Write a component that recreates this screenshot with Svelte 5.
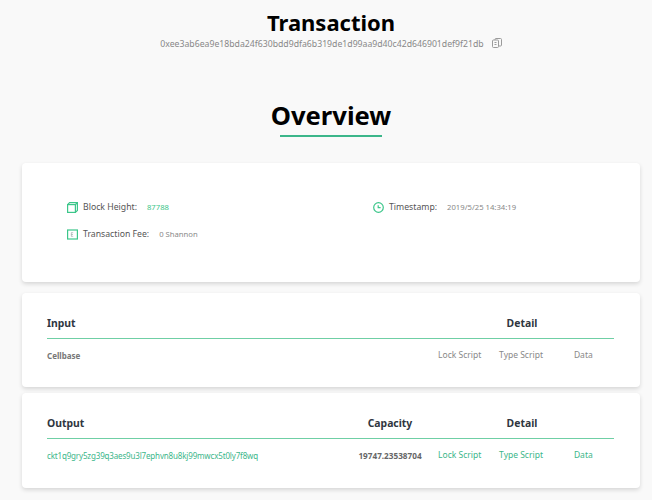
<script>
  const overview = [
    { label: 'Block Height:', value: '87788', icon: 'block', green: true },
    { label: 'Timestamp:', value: '2019/5/25 14:34:19', icon: 'clock' },
    { label: 'Transaction Fee:', value: '0 Shannon', icon: 'fee' }
  ];
  const scripts = ['Lock Script', 'Type Script', 'Data'];
</script>

<div class="page">
  <header class="head">
    <h1>Transaction</h1>
    <div class="hash">
      <span>0xee3ab6ea9e18bda24f630bdd9dfa6b319de1d99aa9d40c42d646901def9f21db</span>
      <svg class="copy" viewBox="0 0 10 10" width="10" height="10" fill="none" stroke="#9b9b9b" stroke-width="1">
        <rect x="0.5" y="2" width="6" height="7.5" rx="1" />
        <path d="M3 2V1.5a1 1 0 0 1 1-1h4.5a1 1 0 0 1 1 1V7a1 1 0 0 1-1 1H6.5" />
        <path d="M2.5 4.5h2M2.5 6.5h2" />
      </svg>
    </div>
  </header>

  <h2 class="title"><span>Overview</span></h2>

  <section class="card overview">
    {#each overview as item}
      <div class="item">
        {#if item.icon === 'block'}
          <svg viewBox="0 0 11 11" width="11" height="11" fill="none" stroke="#3cc68a" stroke-width="1.2">
            <rect x="0.6" y="2.6" width="7.8" height="7.8" />
            <path d="M0.6 2.6L2.6 0.6H10.4V8.4L8.4 10.4M8.4 2.6L10.4 0.6" />
          </svg>
        {:else if item.icon === 'clock'}
          <svg viewBox="0 0 11 11" width="11" height="11" fill="none" stroke="#3cc68a" stroke-width="1.2">
            <circle cx="5.5" cy="5.5" r="4.8" />
            <path d="M5.2 3.2V5.6H7.6" />
          </svg>
        {:else}
          <svg viewBox="0 0 11 11" width="11" height="11" fill="none" stroke="#3cc68a" stroke-width="1.2">
            <rect x="0.6" y="1" width="9.8" height="9" />
            <path d="M4.2 3.7H6.2M4.2 5.5H6M4.2 7.3H6.2M4.3 3.7V7.3" stroke="#8fa0a0" stroke-width="0.6" />
          </svg>
        {/if}
        <span class="label">{item.label}</span>
        <span class="value" class:green={item.green}>{item.value}</span>
      </div>
    {/each}
  </section>

  <section class="card table">
    <div class="row top">
      <div class="th">Input</div>
      <div class="th center detail">Detail</div>
    </div>
    <div class="row body">
      <div class="cellbase">Cellbase</div>
      {#each scripts as s, i}
        <div class="script" style="grid-column: {i + 3}">{s}</div>
      {/each}
    </div>
  </section>

  <section class="card table">
    <div class="row top">
      <div class="th">Output</div>
      <div class="th center">Capacity</div>
      <div class="th center detail">Detail</div>
    </div>
    <div class="row body">
      <div class="address">ckt1q9gry5zg39q3aes9u3l7ephvn8u8kj99mwcx5t0ly7f8wq</div>
      <div class="capacity">19747.23538704</div>
      {#each scripts as s}
        <div class="script green">{s}</div>
      {/each}
    </div>
  </section>
</div>

<style>
  :global(body) {
    background: #f9f9f9;
    font-family: "Noto Sans", "Open Sans", sans-serif;
    overflow: hidden;
  }

  .page {
    height: 500px;
    padding: 0 12px 0 22px;
    box-sizing: border-box;
    overflow: hidden;
  }

  .head {
    text-align: center;
    padding-top: 7px;
  }

  h1 {
    margin: 0;
    font-size: 22px;
    line-height: 30px;
    font-weight: 700;
    color: #000;
  }

  .hash {
    display: flex;
    justify-content: center;
    align-items: center;
    gap: 8px;
    font-size: 8.7px;
    line-height: 14px;
    color: #888;
  }

  .copy {
    margin-top: -3px;
  }

  .title {
    margin: 46px 0 0;
    text-align: center;
    font-size: 25.6px;
    line-height: 38px;
    font-weight: 700;
    color: #000;
  }

  .title span {
    display: inline-block;
    position: relative;
  }

  .title span::after {
    content: '';
    position: absolute;
    left: 9px;
    right: 9px;
    bottom: -2px;
    height: 2px;
    background: #3cb68a;
  }

  .card {
    background: #fff;
    border-radius: 4px;
    box-shadow: 0 2px 4px rgba(0, 0, 0, 0.14);
    box-sizing: border-box;
  }

  .overview {
    margin-top: 28px;
    height: 119px;
    padding: 34px 0 0 45px;
    display: grid;
    grid-template-columns: 306px 1fr;
    grid-auto-rows: 27px;
  }

  .item {
    display: flex;
    align-items: center;
    height: 20px;
  }

  .label {
    margin-left: 5px;
    font-size: 8.7px;
    color: #555;
  }

  .value {
    margin-left: 10px;
    font-size: 7.7px;
    color: #888;
  }

  .value.green {
    color: #3cc68a;
  }

  .table {
    height: 94px;
    margin-top: 11px;
    padding: 0 26px 0 25px;
  }

  .table + .table {
    margin-top: 6px;
    height: 95px;
  }

  .row {
    display: grid;
    grid-template-columns: 303px 80px 59.4px 63.27px 61.33px;
    align-items: center;
  }

  .top {
    padding-top: 15px;
    height: 46px;
    box-sizing: border-box;
    border-bottom: 1px solid #6fcfa5;
  }

  .body {
    height: 32px;
  }

  .th {
    font-size: 10.4px;
    font-weight: 700;
    color: #2f3640;
  }

  .center {
    text-align: center;
  }

  .detail {
    grid-column: 3 / 6;
  }

  .cellbase {
    font-size: 8px;
    font-weight: 700;
    color: #777;
  }

  .address {
    font-size: 8px;
    letter-spacing: -0.16px;
    color: #3cb68a;
    white-space: nowrap;
  }

  .capacity {
    font-size: 8.2px;
    font-weight: 700;
    color: #666;
    text-align: center;
    white-space: nowrap;
  }

  .script {
    font-size: 8.5px;
    color: #888;
    text-align: center;
    margin-top: -2px;
    white-space: nowrap;
  }

  .script.green {
    color: #3cb68a;
  }
</style>
